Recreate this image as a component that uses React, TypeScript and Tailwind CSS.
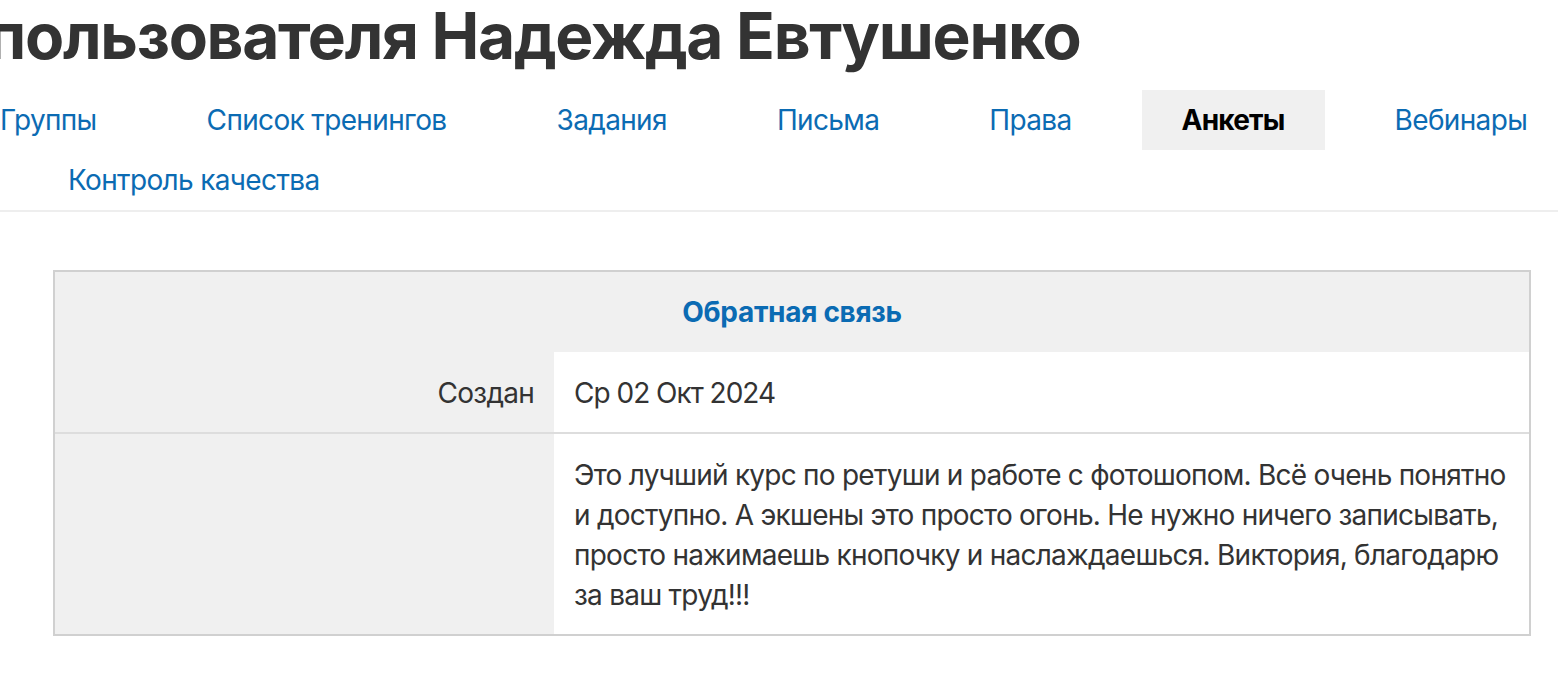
const TABS = ['Группы', 'Список тренингов', 'Задания', 'Письма', 'Права', 'Анкеты', 'Вебинары']

function Tab({ label, active }: { label: string; active?: boolean }) {
  return (
    <a
      className={
        active
          ? 'h-[60px] px-10 flex items-center bg-[#f0f0f0] font-bold text-black whitespace-nowrap tracking-[-0.8px]'
          : 'h-[60px] px-10 flex items-center text-[#0b6bb3] whitespace-nowrap'
      }
    >
      {label}
    </a>
  )
}

export default function App() {
  return (
    <div className="w-[1558px] h-[680px] overflow-hidden bg-white text-[#333] font-['Inter',sans-serif]">
      <h1 className="ml-[-13px] h-[90px] text-[64px] leading-[72px] font-bold tracking-[-1.3px] whitespace-nowrap">
        пользователя Надежда Евтушенко
      </h1>

      <nav className="border-b-2 border-[#eeeeee] text-[28px] tracking-[-0.65px]">
        <div className="flex gap-[30px] ml-[-40px]">
          {TABS.map(t => (
            <Tab key={t} label={t} active={t === 'Анкеты'} />
          ))}
        </div>
        <div className="flex ml-[28px]">
          <Tab label="Контроль качества" />
        </div>
      </nav>

      <div className="mt-[58px] ml-[53px] w-[1478px] border-2 border-[#d0d0d0] text-[28px] tracking-[-0.75px]">
        <div className="h-[80px] flex items-center justify-center bg-[#f0f0f0] font-bold text-[#0b6bb3] tracking-[-0.3px]">
          Обратная связь
        </div>
        <div className="grid grid-cols-[499px_minmax(0,1fr)]">
          <div className="h-[80px] bg-[#f0f0f0] flex items-center justify-end px-5 pt-[2px]">Создан</div>
          <div className="h-[80px] bg-white flex items-center px-5 pt-[2px] tracking-[-1px]">Ср 02 Окт 2024</div>
        </div>
        <div className="grid grid-cols-[499px_minmax(0,1fr)] border-t-2 border-[#dddddd]">
          <div className="bg-[#f0f0f0]" />
          <div className="bg-white px-5 pt-[21px] pb-[19px] leading-[40px] whitespace-nowrap">
            Это лучший курс по ретуши и работе с фотошопом. Всё очень понятно
            <br />
            и доступно. А экшены это просто огонь. Не нужно ничего записывать,
            <br />
            просто нажимаешь кнопочку и наслаждаешься. Виктория, благодарю
            <br />
            за ваш труд!!!
          </div>
        </div>
      </div>
    </div>
  )
}
